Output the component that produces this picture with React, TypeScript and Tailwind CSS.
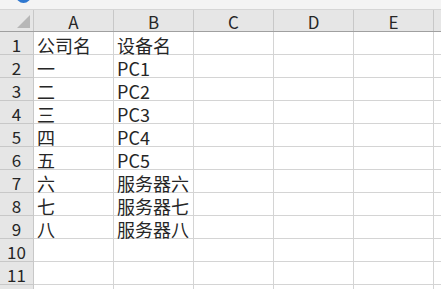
const cols = ["A", "B", "C", "D", "E"];

const data: string[][] = [
  ["公司名", "设备名"],
  ["一", "PC1"],
  ["二", "PC2"],
  ["三", "PC3"],
  ["四", "PC4"],
  ["五", "PC5"],
  ["六", "服务器六"],
  ["七", "服务器七"],
  ["八", "服务器八"],
  [],
  [],
  [],
];

const font = { fontFamily: '"Noto Sans CJK SC", "Noto Sans", sans-serif' };

export default function App() {
  return (
    <div className="w-[441px] h-[289px] overflow-hidden bg-white text-[#262626]" style={font}>
      {/* top strip */}
      <div className="relative h-[9px] bg-[#f4f4f4] overflow-hidden">
        <div className="absolute left-[16px] top-[-12px] w-[15px] h-[15px] rounded-full bg-[#2f78d0]" />
      </div>

      {/* column headers */}
      <div className="flex h-[23px] bg-[#e6e6e6] border-t border-[#d6d6d6] border-b border-b-[#a0a0a0]">
        <div className="relative w-[34px] shrink-0 border-r border-[#c8c8c8]">
          <svg className="absolute right-[3px] bottom-[3px]" width="13" height="13" viewBox="0 0 13 13">
            <polygon points="13,0 13,13 0,13" fill="#b7b7b7" />
          </svg>
        </div>
        {cols.map((c) => (
          <div
            key={c}
            className="w-[80px] shrink-0 border-r border-[#c8c8c8] flex items-center justify-center pt-[2px] text-[17px] leading-none"
          >
            {c}
          </div>
        ))}
        <div className="flex-1" />
      </div>

      {/* rows */}
      {data.map((row, i) => (
        <div key={i} className="flex h-[23px]">
          <div className="w-[34px] shrink-0 bg-[#e6e6e6] border-r border-b border-[#c8c8c8] flex items-center justify-center pt-[3px] text-[17px] leading-none">
            {i + 1}
          </div>
          {cols.map((c, j) => (
            <div
              key={c}
              className="w-[80px] shrink-0 border-r border-b border-[#d4d4d4] pl-[3px] pt-[4px] flex items-center text-[18px] leading-none whitespace-nowrap"
            >
              {row[j] ?? ""}
            </div>
          ))}
          <div className="flex-1 border-b border-[#d4d4d4]" />
        </div>
      ))}
    </div>
  );
}
